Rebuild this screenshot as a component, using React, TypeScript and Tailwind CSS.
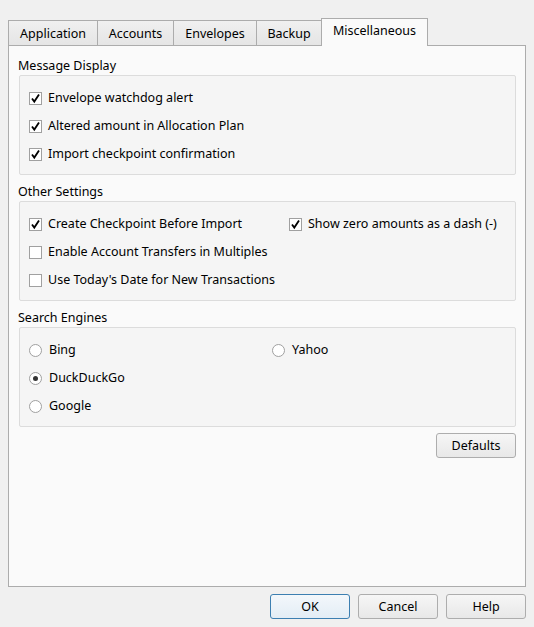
import React from "react";

const tabs = [
  { label: "Application", w: "w-[90px]" },
  { label: "Accounts", w: "w-[77px]" },
  { label: "Envelopes", w: "w-[84px]" },
  { label: "Backup", w: "w-[66px]" },
];

const CheckBox = ({ checked, label }: { checked?: boolean; label: string }) => (
  <div className="flex items-center h-[28px]">
    <span className="w-[13px] h-[13px] border border-[#a0a0a0] bg-white flex items-center justify-center shrink-0">
      {checked && (
        <svg width="11" height="11" viewBox="0 0 11 11">
          <path d="M2 5.5 L4.3 8.6 L9 1.6" fill="none" stroke="#000" strokeWidth="1.8" />
        </svg>
      )}
    </span>
    <span className="ml-[6px] pt-px whitespace-nowrap">{label}</span>
  </div>
);

const Radio = ({ checked, label }: { checked?: boolean; label: string }) => (
  <div className="flex items-center h-[28px]">
    <span className="w-[13px] h-[13px] rounded-full border border-[#a0a0a0] bg-white flex items-center justify-center shrink-0">
      {checked && <span className="w-[5px] h-[5px] rounded-full bg-[#333]" />}
    </span>
    <span className="ml-[7px] pt-px whitespace-nowrap">{label}</span>
  </div>
);

const Group = ({ title, children }: { title: string; children: React.ReactNode }) => (
  <div>
    <div className="h-[16px] leading-[16px] -ml-px">{title}</div>
    <div className="mt-px h-[100px] border border-[#dcdcdc] rounded-[2px] bg-[#f5f5f5] pl-[9px] pt-[8px] pb-[6px]">
      {children}
    </div>
  </div>
);

const Button = ({ label, primary }: { label: string; primary?: boolean }) => (
  <button
    className={`w-[80px] h-[25px] pt-px rounded-[3px] border ${
      primary
        ? "border-[#3c7fb1] bg-linear-to-b from-[#f3f7fb] to-[#e3edf5]"
        : "border-[#adadad] bg-linear-to-b from-[#f6f6f6] to-[#e8e8e8]"
    } text-black`}
  >
    {label}
  </button>
);

export default function App() {
  return (
    <div
      className="w-[534px] h-[627px] bg-[#f0f0f0] text-[12.5px] text-black overflow-hidden"
      style={{ fontFamily: '"Segoe UI", "Noto Sans", sans-serif' }}
    >
      {/* tab strip */}
      <div className="flex items-end h-[46px] pl-[8px] pr-[8px]">
        {tabs.map((t, i) => (
          <div
            key={t.label}
            className={`${t.w} h-[26px] ${i > 0 ? "-ml-px" : ""} border border-[#acacac] bg-linear-to-b from-[#f0f0f0] to-[#e5e5e5] flex items-center justify-center pt-[2px]`}
          >
            {t.label}
          </div>
        ))}
        <div className="w-[107px] h-[28px] -ml-px border border-b-0 border-[#acacac] bg-[#fafafa] flex items-center justify-center pb-[2px]">
          Miscellaneous
        </div>
        <div className="flex-1 h-full border-b border-[#acacac]" />
      </div>

      {/* tab page */}
      <div className="mx-[8px] h-[541px] border border-t-0 border-[#acacac] bg-[#fafafa] pl-[10px] pr-[9px] pt-[12px]">
        <Group title="Message Display">
          <CheckBox checked label="Envelope watchdog alert" />
          <CheckBox checked label="Altered amount in Allocation Plan" />
          <CheckBox checked label="Import checkpoint confirmation" />
        </Group>

        <div className="mt-[9px]">
          <Group title="Other Settings">
            <div className="grid grid-cols-[260px_1fr]">
              <CheckBox checked label="Create Checkpoint Before Import" />
              <CheckBox checked label="Show zero amounts as a dash (-)" />
              <CheckBox label="Enable Account Transfers in Multiples" />
              <div />
              <CheckBox label="Use Today's Date for New Transactions" />
            </div>
          </Group>
        </div>

        <div className="mt-[9px]">
          <Group title="Search Engines">
            <div className="grid grid-cols-[243px_1fr]">
              <Radio label="Bing" />
              <Radio label="Yahoo" />
              <Radio checked label="DuckDuckGo" />
              <div />
              <Radio label="Google" />
            </div>
          </Group>
        </div>

        <div className="flex justify-end mt-[6px]">
          <Button label="Defaults" />
        </div>
      </div>

      {/* dialog buttons */}
      <div className="flex justify-end gap-[8px] pr-[8px] mt-[7px]">
        <Button label="OK" primary />
        <Button label="Cancel" />
        <Button label="Help" />
      </div>
    </div>
  );
}
